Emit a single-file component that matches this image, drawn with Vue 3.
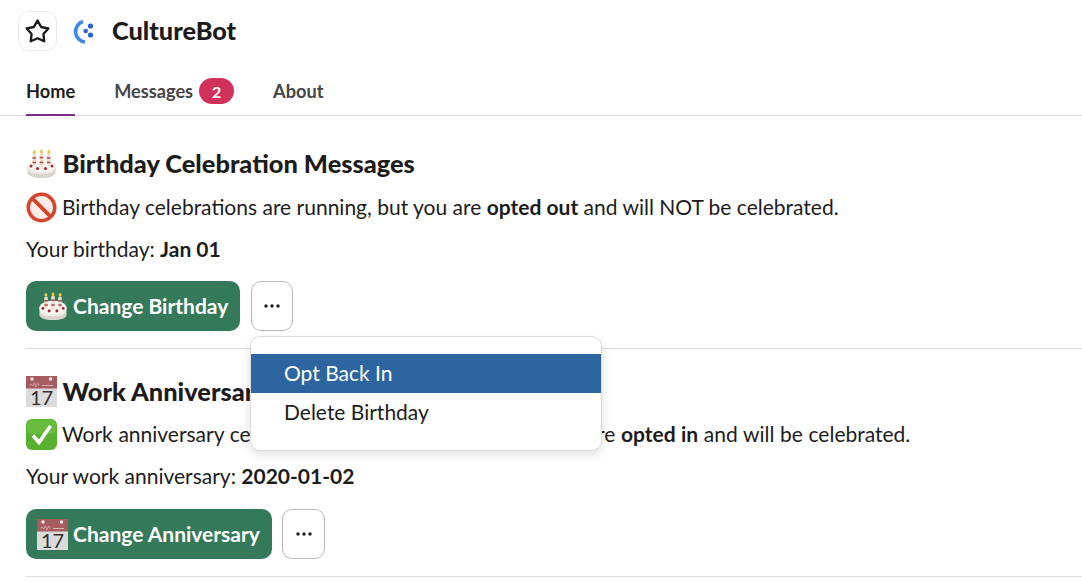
<script setup>
const tabs = [
  { label: 'Home', active: true },
  { label: 'Messages', badge: 2 },
  { label: 'About' },
]
</script>

<template>
  <div class="page">
    <svg class="defs" width="0" height="0" aria-hidden="true">
      <symbol id="cake" viewBox="0 0 31 31">
        <path d="M1.500 17c0-1 28-1 28 0v7.500c0 3.500-6 5.500-14 5.500s-14-2-14-5.500z" fill="#d8d4ce" />
        <path d="M1.500 17c0 7 3 9 14 9s14-2 14-9" fill="#efece7" />
        <ellipse cx="15.500" cy="17" rx="14" ry="7" fill="#faf8f4" />
        <rect x="6.500" y="6" width="3.600" height="12" rx="1" fill="#e9dfcc" />
        <rect x="13.700" y="5" width="3.600" height="14.500" rx="1" fill="#e9dfcc" />
        <rect x="20.900" y="6" width="3.600" height="12" rx="1" fill="#e9dfcc" />
        <path d="M6.500 10h3.600M13.700 9.500h3.600M20.900 10h3.600M6.500 14.500h3.600M13.700 14.500h3.600M20.900 14.500h3.600" stroke="#b9404c" stroke-width="1.600" />
        <path d="M8.200 1.500c1.200 1.500 1.500 2.300 1.500 3a1.500 1.500 0 0 1-3 0c0-.7.300-1.500 1.500-3zM15.500 .8c1.200 1.500 1.500 2.300 1.500 3a1.500 1.500 0 0 1-3 0c0-.7.300-1.500 1.500-3zM22.800 1.500c1.200 1.500 1.500 2.300 1.500 3a1.500 1.500 0 0 1-3 0c0-.7.300-1.500 1.500-3z" fill="#e9c743" />
        <circle cx="5" cy="18" r="1.500" fill="#a8263a" />
        <circle cx="11.500" cy="20.500" r="1.600" fill="#a8263a" />
        <circle cx="19.500" cy="20.500" r="1.600" fill="#a8263a" />
        <circle cx="26" cy="18" r="1.500" fill="#a8263a" />
      </symbol>
      <symbol id="calendar" viewBox="0 0 31 31">
        <rect width="31" height="31" fill="#dcdbdb" />
        <rect width="31" height="12.500" fill="#a65b5d" />
        <path d="M4 9.500c1-4 2 1 3 0s1-5 2-1 1 2 2 0 1-2 2 1M16 9.500h11" fill="none" stroke="#d9b3b3" stroke-width="1" />
        <circle cx="6" cy="3" r="1.700" fill="#f2eeee" />
        <circle cx="24.500" cy="3" r="1.700" fill="#f2eeee" />
      </symbol>
    </svg>

    <header class="head">
      <button class="star-btn" aria-label="Star">
        <svg width="27" height="27" viewBox="0 0 26 26">
          <path d="M13 2.500L16.530 8.650 23.460 10.100 18.710 15.350 19.470 22.400 13 19.500 6.530 22.400 7.290 15.350 2.540 10.100 9.470 8.650z" fill="none" stroke="#1d1c1d" stroke-width="2.300" stroke-linejoin="round" />
        </svg>
      </button>
      <span class="app-icon">
        <svg width="33" height="33" viewBox="0 0 33 33">
          <path d="M16 6.500A10.500 10.500 0 0 0 18 27" fill="none" stroke="#3d87f0" stroke-width="3.600" />
          <circle cx="18.700" cy="16" r="2.300" fill="#2a63d8" />
          <circle cx="23.500" cy="11" r="2.600" fill="#2a63d8" />
          <circle cx="23.500" cy="20" r="2.600" fill="#2a63d8" />
        </svg>
      </span>
      <h1 class="app-name">CultureBot</h1>
    </header>

    <nav class="tabs">
      <a v-for="t in tabs" :key="t.label" class="tab" :class="{ active: t.active }">
        {{ t.label }}
        <span v-if="t.badge" class="badge">{{ t.badge }}</span>
      </a>
    </nav>

    <section class="block first">
      <h2 class="title">
        <svg class="emoji" width="31" height="31"><use href="#cake" /></svg>
        <span>Birthday Celebration Messages</span>
      </h2>
      <p class="line">
        <svg class="emoji" width="31" height="31" viewBox="0 0 31 31">
          <circle cx="15.500" cy="15.500" r="13.200" fill="#f7ebe6" stroke="#d5452b" stroke-width="3.600" />
          <path d="M6.200 6.200l18.600 18.600" stroke="#d5452b" stroke-width="3.800" />
        </svg>
        <span>Birthday celebrations are running, but you are <b>opted out</b> and will NOT be celebrated.</span>
      </p>
      <p class="line plain">Your birthday: <b>Jan 01</b></p>
      <div class="actions">
        <button class="primary">
          <svg class="emoji" width="30" height="30"><use href="#cake" /></svg>
          <span>Change Birthday</span>
        </button>
        <div class="more-wrap">
          <button class="more" aria-label="More">
            <svg width="18" height="6" viewBox="0 0 18 6"><circle cx="3" cy="3" r="1.700" /><circle cx="9" cy="3" r="1.700" /><circle cx="15" cy="3" r="1.700" /></svg>
          </button>
          <div class="menu">
            <div class="item selected">Opt Back In</div>
            <div class="item">Delete Birthday</div>
          </div>
        </div>
      </div>
    </section>

    <section class="block second">
      <h2 class="title">
        <svg class="emoji" width="31" height="31" viewBox="0 0 31 31">
          <use href="#calendar" width="31" height="31" />
          <text x="15.500" y="29" class="cal">17</text>
        </svg>
        <span>Work Anniversary Celebration Messages</span>
      </h2>
      <p class="line">
        <svg class="emoji" width="31" height="31" viewBox="0 0 31 31">
          <rect width="31" height="31" rx="6" fill="#58b12e" />
          <rect x="1" y="1" width="29" height="14" rx="5" fill="#7ecb52" opacity=".45" />
          <path d="M7 16.500l6 7L24.500 7" fill="none" stroke="#fff" stroke-width="3.600" />
        </svg>
        <span>Work anniversary celebrations are now running, and you are <b>opted in</b> and will be celebrated.</span>
      </p>
      <p class="line plain">Your work anniversary: <b>2020-01-02</b></p>
      <div class="actions">
        <button class="primary">
          <svg class="emoji" width="31" height="31" viewBox="0 0 31 31">
            <use href="#calendar" width="31" height="31" />
            <text x="15.500" y="29" class="cal">17</text>
          </svg>
          <span>Change Anniversary</span>
        </button>
        <button class="more" aria-label="More">
          <svg width="18" height="6" viewBox="0 0 18 6"><circle cx="3" cy="3" r="1.700" /><circle cx="9" cy="3" r="1.700" /><circle cx="15" cy="3" r="1.700" /></svg>
        </button>
      </div>
    </section>
  </div>
</template>

<style>
html, body {
  margin: 0;
  background: #fff;
  overflow: hidden;
}
</style>

<style scoped>
.page {
  width: 1082px;
  height: 582px;
  overflow: hidden;
  font-family: Lato, "Liberation Sans", sans-serif;
  color: #1d1c1d;
  font-size: 21px;
}
.defs {
  position: absolute;
}
.emoji {
  flex: none;
  overflow: visible;
}
.head {
  display: flex;
  align-items: center;
  height: 40px;
  padding: 11px 0 0 18px;
}
.star-btn {
  display: flex;
  align-items: center;
  justify-content: center;
  box-sizing: border-box;
  width: 39px;
  height: 40px;
  padding: 0;
  background: #fff;
  border: 1px solid #ebebeb;
  border-radius: 11px;
}
.app-icon {
  width: 33px;
  height: 33px;
  margin-left: 10px;
  border-radius: 8px;
}
.app-name {
  margin: 0 0 2px 12px;
  font-size: 25.300px;
  font-weight: 900;
  line-height: 38px;
}
.tabs {
  display: flex;
  gap: 39px;
  height: 44px;
  margin-top: 20px;
  padding-left: 26px;
  border-bottom: 1px solid #dddddd;
}
.tab {
  display: flex;
  align-items: center;
  gap: 6px;
  box-sizing: border-box;
  height: 45px;
  padding-bottom: 5px;
  font-size: 18.200px;
  font-weight: 700;
  color: #454447;
}
.tab.active {
  color: #1d1c1d;
  border-bottom: 2px solid #7c3085;
  padding-bottom: 3px;
}
.badge {
  display: inline-flex;
  align-items: center;
  justify-content: center;
  width: 35px;
  height: 26px;
  border-radius: 13px;
  background: #d0325c;
  color: #fff;
  font-size: 16px;
}
.block {
  margin-left: 26px;
  border-bottom: 1px solid #dddddd;
}
.first {
  height: 200px;
  padding-top: 32px;
}
.second {
  height: 200px;
  padding-top: 27px;
}
.title {
  display: flex;
  align-items: center;
  gap: 5.500px;
  height: 31px;
  margin: 0;
  font-size: 25.400px;
  font-weight: 900;
  white-space: nowrap;
}
.title span,
.line span,
.primary span {
  padding-bottom: 2px;
}
.line {
  display: flex;
  align-items: center;
  gap: 5px;
  height: 31px;
  margin: 13px 0 0;
  white-space: nowrap;
}
.second .line {
  margin-top: 12px;
}
.second .line span {
  word-spacing: 0.250px;
}
.plain {
  display: block;
  height: 29px;
  line-height: 29px;
  margin: 11px 0 2px;
}
.second .plain {
  margin-top: 11px;
}
.actions {
  display: flex;
  gap: 11px;
  margin-top: 18px;
}
.second .actions {
  gap: 10px;
  margin-top: 19px;
}
.primary {
  display: flex;
  align-items: center;
  gap: 5px;
  box-sizing: border-box;
  width: 214px;
  height: 50px;
  padding: 0 0 0 12px;
  background: #35795b;
  color: #fff;
  border: none;
  border-radius: 10px;
  font: 700 21px Lato, "Liberation Sans", sans-serif;
  white-space: nowrap;
}
.second .primary {
  width: 246px;
  padding-left: 11px;
}
.more {
  display: flex;
  align-items: center;
  justify-content: center;
  box-sizing: border-box;
  width: 42px;
  height: 50px;
  padding: 0;
  background: #fff;
  border: 1px solid #b7b7b7;
  border-radius: 10px;
  fill: #1d1c1d;
}
.second .more {
  width: 43px;
}
.more-wrap {
  position: relative;
}
.menu {
  position: absolute;
  top: 55px;
  left: -1px;
  z-index: 5;
  width: 352px;
  padding: 17px 0 18px;
  box-sizing: border-box;
  background: #fff;
  border: 1px solid #dcdcdc;
  border-radius: 10px;
  box-shadow: 0 4px 12px rgba(0, 0, 0, 0.12);
}
.item {
  height: 39px;
  padding-left: 33px;
  line-height: 38px;
}
.item.selected {
  background: #2c65a0;
  color: #fff;
}
.cal {
  font: 400 20px Lato, sans-serif;
  fill: #333;
  text-anchor: middle;
}
</style>
